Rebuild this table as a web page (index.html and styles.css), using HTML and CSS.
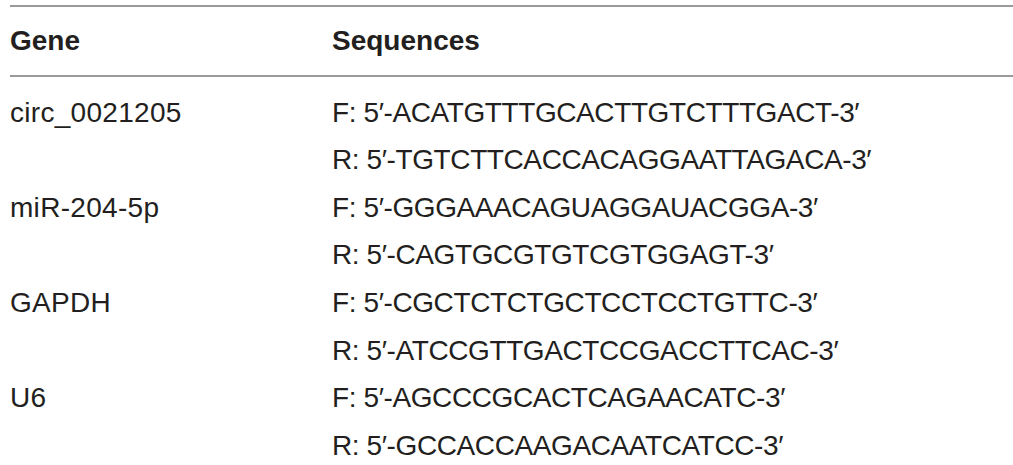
FILE: index.html
```html
<!DOCTYPE html>
<html>
<head>
<meta charset="utf-8">
<link rel="stylesheet" href="styles.css">
</head>
<body>
<div class="table">
  <div class="row head">
    <div class="gene">Gene</div>
    <div class="seq">Sequences</div>
  </div>
  <div class="body">
    <div class="row">
      <div class="gene">circ_0021205</div>
      <div class="seq"><div>F: 5′-ACATGTTTGCACTTGTCTTTGACT-3′</div><div>R: 5′-TGTCTTCACCACAGGAATTAGACA-3′</div></div>
    </div>
    <div class="row">
      <div class="gene">miR-204-5p</div>
      <div class="seq"><div>F: 5′-GGGAAACAGUAGGAUACGGA-3′</div><div>R: 5′-CAGTGCGTGTCGTGGAGT-3′</div></div>
    </div>
    <div class="row">
      <div class="gene">GAPDH</div>
      <div class="seq"><div>F: 5′-CGCTCTCTGCTCCTCCTGTTC-3′</div><div>R: 5′-ATCCGTTGACTCCGACCTTCAC-3′</div></div>
    </div>
    <div class="row">
      <div class="gene">U6</div>
      <div class="seq"><div>F: 5′-AGCCCGCACTCAGAACATC-3′</div><div>R: 5′-GCCACCAAGACAATCATCC-3′</div></div>
    </div>
  </div>
</div>
</body>
</html>
```
FILE: styles.css
```css
html, body {
  margin: 0;
  padding: 0;
  background: #fff;
  overflow: hidden;
}
.table {
  margin: 5px 0 0 10px;
  font-family: "Liberation Sans", Arial, sans-serif;
  font-size: 28px;
  line-height: 47.6px;
  color: #231f20;
}
.row {
  display: grid;
  grid-template-columns: 322px 1fr;
}
.head {
  border-top: 2px solid #9a9a9a;
  border-bottom: 2px solid #9a9a9a;
  padding: 10px 0 10px;
  font-weight: bold;
}
.body {
  padding-top: 12px;
}
.body .gene {
  letter-spacing: 0.3px;
}
.body .seq {
  letter-spacing: -0.4px;
}
```
